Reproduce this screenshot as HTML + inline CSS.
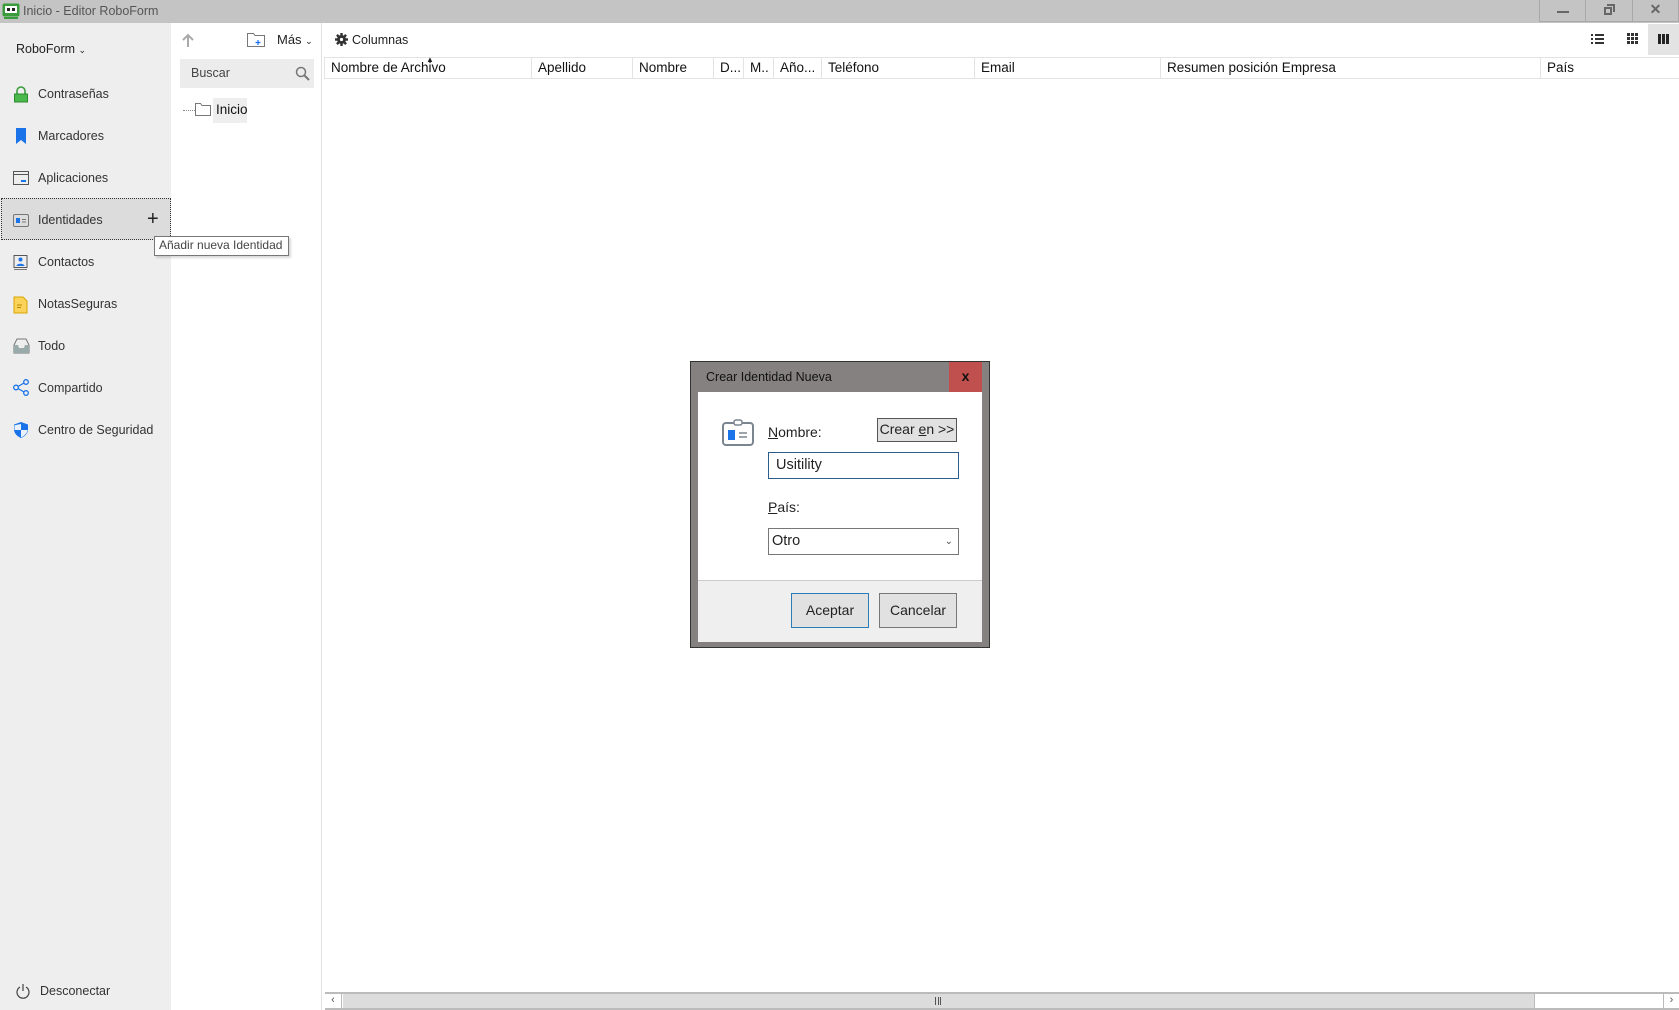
<!DOCTYPE html>
<html><head><meta charset="utf-8">
<style>
*{box-sizing:border-box;margin:0;padding:0}
body{width:1679px;height:1010px;overflow:hidden;background:#fff;font-family:"Segoe UI","Liberation Sans",sans-serif;font-size:13px;color:#222;position:relative}
.abs{position:absolute}
#title{left:0;top:0;width:1679px;height:23px;background:#c4c4c4}
#side{left:0;top:23px;width:171px;height:987px;background:#eeeeee}
.item{position:absolute;left:38px;font-size:12.5px;color:#333}
.ico{position:absolute;left:13px}
#tree{left:171px;top:23px;width:151px;height:987px;background:#fff;border-right:1px solid #e2e2e2}
.th{position:absolute;top:57px;height:22px;border-right:1px solid #e3e3e3;border-top:1px solid #e3e3e3;border-bottom:1px solid #e3e3e3;padding-left:6px;line-height:20px;font-size:13.5px;color:#111}
</style></head><body>
<div id="title" class="abs">
  <svg class="abs" style="left:2px;top:3px" width="18" height="16"><rect x="0.5" y="0.5" width="17" height="13" rx="2" fill="#3a9c3a"/><rect x="3" y="3" width="12" height="7" fill="#fff"/><rect x="5" y="5" width="3" height="3" fill="#222"/><rect x="10" y="5" width="3" height="3" fill="#222"/><rect x="2" y="14" width="14" height="2" fill="#3a9c3a"/></svg>
  <div class="abs" style="left:23px;top:4px;font-size:12.5px;color:#555">Inicio - Editor RoboForm</div>
  <div class="abs" style="left:1539px;top:0;width:47px;height:22px;border:1px solid #a8a8a8;border-top:none"><div class="abs" style="left:17px;top:11px;width:12px;height:2px;background:#666"></div></div>
  <div class="abs" style="left:1586px;top:0;width:46px;height:22px;border-bottom:1px solid #a8a8a8"><div class="abs" style="left:18px;top:7px;width:8px;height:8px;border:2px solid #666"></div><div class="abs" style="left:21px;top:4px;width:8px;height:8px;border-top:2px solid #666;border-right:2px solid #666"></div></div>
  <div class="abs" style="left:1632px;top:0;width:47px;height:22px;border:1px solid #a8a8a8;border-top:none;text-align:center;font-weight:bold;color:#666;line-height:18px;font-size:14px">✕</div>
</div>
<div id="side" class="abs">
  <div class="item" style="left:16px;top:19px;color:#222">RoboForm <span style="font-size:9px">&#8964;</span></div>
  <svg class="ico" style="top:63px" width="16" height="17"><path d="M4 8V5a4 4 0 0 1 8 0v3" fill="none" stroke="#3a9c3a" stroke-width="1.6"/><rect x="1.5" y="8" width="13" height="8" fill="#4bb84b" stroke="#2d8a2d"/></svg>
  <div class="item" style="top:64px">Contraseñas</div>
  <svg class="ico" style="top:105px" width="16" height="17"><path d="M3 0h10v16l-5-4-5 4z" fill="#1a73e8"/></svg>
  <div class="item" style="top:106px">Marcadores</div>
  <svg class="ico" style="top:148px" width="17" height="15"><rect x="0.5" y="0.5" width="15" height="13" fill="none" stroke="#555"/><line x1="1" y1="3.5" x2="15" y2="3.5" stroke="#555"/><rect x="8" y="9" width="5" height="2" fill="#1a73e8"/></svg>
  <div class="item" style="top:148px">Aplicaciones</div>
  <div class="abs" style="left:1px;top:175px;width:170px;height:42px;background:#dcdcdc;border:1px dotted #333"></div>
  <svg class="ico" style="top:190px" width="17" height="15"><rect x="0.5" y="1.5" width="15" height="12" rx="1.5" fill="none" stroke="#777"/><rect x="3" y="5" width="4" height="5" fill="#1a73e8"/><line x1="9" y1="6.5" x2="13" y2="6.5" stroke="#777"/><line x1="9" y1="9" x2="13" y2="9" stroke="#777"/></svg>
  <div class="item" style="top:190px">Identidades</div>
  <div class="abs" style="left:147px;top:185px;font-size:20px;color:#222">+</div>
  <svg class="ico" style="top:231px" width="16" height="17"><rect x="1" y="1.5" width="13" height="12" fill="none" stroke="#555"/><circle cx="7.5" cy="5.5" r="2" fill="#1a73e8"/><path d="M3.5 12c0-3 8-3 8 0z" fill="#1a73e8"/><line x1="1" y1="15.5" x2="14" y2="15.5" stroke="#777"/></svg>
  <div class="item" style="top:232px">Contactos</div>
  <svg class="ico" style="top:273px" width="16" height="18"><path d="M1 1h9l4 4v12H1z" fill="#fbd35a" stroke="#d9a400"/><line x1="4" y1="9" x2="9" y2="9" stroke="#b98a00"/><line x1="4" y1="11.5" x2="8" y2="11.5" stroke="#b98a00"/></svg>
  <div class="item" style="top:274px">NotasSeguras</div>
  <svg class="ico" style="top:315px" width="17" height="16"><path d="M1 7l3-6h9l3 6v8H1z" fill="#eee" stroke="#777"/><path d="M1 7h4l1 3h5l1-3h4v8H1z" fill="#9aa"/></svg>
  <div class="item" style="top:316px">Todo</div>
  <svg class="ico" style="top:356px" width="17" height="17"><circle cx="3" cy="8.5" r="2.3" fill="none" stroke="#1a73e8" stroke-width="1.3"/><circle cx="13" cy="3" r="2.3" fill="none" stroke="#1a73e8" stroke-width="1.3"/><circle cx="13" cy="14" r="2.3" fill="none" stroke="#1a73e8" stroke-width="1.3"/><path d="M5 7.5l6-3.5M5 9.5l6 3.5" stroke="#1a73e8" stroke-width="1.2"/></svg>
  <div class="item" style="top:358px">Compartido</div>
  <svg class="ico" style="top:398px" width="16" height="18"><path d="M8 1l7 2.5v5c0 4-3.5 7-7 8.5C4.5 15.5 1 12.5 1 8.5v-5z" fill="#1a73e8"/><path d="M8 3v6h6.5c-.3 3.4-3.4 6.2-6.5 7.4V9H1.5V4.2z" fill="#fff" opacity=".9"/></svg>
  <div class="item" style="top:400px">Centro de Seguridad</div>
  <svg class="ico" style="left:15px;top:960px" width="16" height="17"><path d="M5 4a6 6 0 1 0 6 0" fill="none" stroke="#444" stroke-width="1.2"/><line x1="8" y1="1" x2="8" y2="8" stroke="#444" stroke-width="1.2"/></svg>
  <div class="item" style="left:40px;top:961px">Desconectar</div>
</div>
<div class="abs" style="left:154px;top:236px;width:135px;height:20px;background:#fff;border:1px solid #777;font-size:12px;color:#444;padding-left:4px;line-height:17px;box-shadow:2px 2px 2px rgba(0,0,0,.15);z-index:3">Añadir nueva Identidad</div>
<div id="tree" class="abs">
  <svg class="abs" style="left:11px;top:10px" width="12" height="14"><path d="M6 14V2M1 7l5-5 5 5" fill="none" stroke="#aaa" stroke-width="2"/></svg>
  <svg class="abs" style="left:76px;top:9px" width="18" height="15"><path d="M.5 1.5h6l1.5 2h9.5v11H.5z" fill="#fff" stroke="#777"/><path d="M11 8v5M8.5 10.5h5" stroke="#1a73e8" stroke-width="1.2"/></svg>
  <div class="abs" style="left:106px;top:9px;font-size:13px;color:#222">Más <span style="font-size:9px">&#8964;</span></div>
  <div class="abs" style="left:9px;top:36px;width:134px;height:29px;background:#ececec"><span class="abs" style="left:11px;top:7px;font-size:12.5px;color:#444">Buscar</span>
  <svg class="abs" style="left:115px;top:7px" width="15" height="15"><circle cx="6" cy="6" r="4.5" fill="none" stroke="#777" stroke-width="1.5"/><line x1="9.5" y1="9.5" x2="14" y2="14" stroke="#777" stroke-width="2"/></svg></div>
  <div class="abs" style="left:12px;top:87px;width:12px;border-top:1px dotted #888"></div>
  <svg class="abs" style="left:24px;top:80px" width="16" height="13"><path d="M.5 .5h5l1.5 2h8.5v10H.5z" fill="#fff" stroke="#777"/></svg>
  <div class="abs" style="left:42px;top:75px;width:34px;height:25px;background:#eee;font-size:13.5px;padding-left:3px;line-height:24px;color:#111">Inicio</div>
</div>
<svg class="abs" style="left:335px;top:33px" width="13" height="13"><g fill="#333"><circle cx="6.5" cy="6.5" r="4.5"/><rect x="5.3" y="0" width="2.4" height="13"/><rect x="0" y="5.3" width="13" height="2.4"/><rect x="5.3" y="0" width="2.4" height="13" transform="rotate(45 6.5 6.5)"/><rect x="5.3" y="0" width="2.4" height="13" transform="rotate(-45 6.5 6.5)"/></g><circle cx="6.5" cy="6.5" r="1.6" fill="#fff"/></svg>
<div class="abs" style="left:352px;top:33px;font-size:12.5px">Columnas</div>
<svg class="abs" style="left:1591px;top:33px" width="13" height="11"><rect x="0" y="1" width="2" height="2" fill="#333"/><rect x="4" y="1" width="9" height="2" fill="#333"/><rect x="0" y="5" width="2" height="2" fill="#333"/><rect x="4" y="5" width="9" height="2" fill="#333"/><rect x="0" y="9" width="2" height="2" fill="#333"/><rect x="4" y="9" width="9" height="2" fill="#333"/></svg>
<svg class="abs" style="left:1627px;top:33px" width="12" height="12"><g fill="#333"><rect x="0" y="0" width="3" height="3"/><rect x="4" y="0" width="3" height="3"/><rect x="8" y="0" width="3" height="3"/><rect x="0" y="4" width="3" height="3"/><rect x="4" y="4" width="3" height="3"/><rect x="8" y="4" width="3" height="3"/><rect x="0" y="8" width="3" height="3"/><rect x="4" y="8" width="3" height="3"/><rect x="8" y="8" width="3" height="3"/></g></svg>
<div class="abs" style="left:1648px;top:24px;width:31px;height:31px;background:#e3e3e3"><svg class="abs" style="left:10px;top:10px" width="12" height="10"><g fill="#222"><rect x="0" y="0" width="3" height="10"/><rect x="4" y="0" width="3" height="10"/><rect x="8" y="0" width="3" height="10"/></g></svg></div>
<div class="th" style="left:324px;width:208px;border-left:1px solid #e3e3e3">Nombre de Archivo</div>
<div class="abs" style="left:426px;top:55px;font-size:8px">&#9650;</div>
<div class="th" style="left:532px;width:101px">Apellido</div>
<div class="th" style="left:633px;width:81px">Nombre</div>
<div class="th" style="left:714px;width:30px">D...</div>
<div class="th" style="left:744px;width:30px">M..</div>
<div class="th" style="left:774px;width:48px">Año...</div>
<div class="th" style="left:822px;width:153px">Teléfono</div>
<div class="th" style="left:975px;width:186px">Email</div>
<div class="th" style="left:1161px;width:380px">Resumen posición Empresa</div>
<div class="th" style="left:1541px;width:138px;border-right:none">País</div>
<div class="abs" style="left:325px;top:992px;width:1354px;height:18px;border-top:2px solid #bbb;border-bottom:2px solid #bbb;background:#fff">
  <div class="abs" style="left:0;top:0;width:17px;height:14px;border-right:1px solid #bbb;font-size:11px;color:#555;text-align:center;line-height:13px">&lsaquo;</div>
  <div class="abs" style="left:18px;top:0;width:1192px;height:14px;background:#dcdcdc;border-right:1px solid #bbb"><div class="abs" style="left:592px;top:3px;width:6px;height:8px;border-left:1px solid #555;border-right:1px solid #555"><div style="margin-left:2px;width:1px;height:8px;background:#555"></div></div></div>
  <div class="abs" style="left:1338px;top:0;width:16px;height:14px;border-left:1px solid #bbb;font-size:11px;color:#555;text-align:center;line-height:13px">&rsaquo;</div>
</div>
<!-- dialog -->
<div class="abs" style="left:690px;top:361px;width:300px;height:287px;background:#858181;border:1px solid #333">
  <div class="abs" style="left:15px;top:8px;font-size:12.5px;color:#111">Crear Identidad Nueva</div>
  <div class="abs" style="left:258px;top:0;width:33px;height:30px;background:#c0504d;text-align:center;font-weight:bold;font-size:14px;line-height:28px;color:#111">x</div>
  <div class="abs" style="left:7px;top:30px;width:284px;height:188px;background:#fff">
    <svg class="abs" style="left:24px;top:27px" width="33" height="27"><rect x="1" y="4" width="30" height="22" rx="3" fill="none" stroke="#7b8590" stroke-width="2"/><rect x="12" y="1" width="8" height="5" rx="2" fill="#fff" stroke="#7b8590" stroke-width="1.5"/><rect x="6" y="11" width="7" height="10" fill="#1a73e8"/><line x1="17" y1="14" x2="25" y2="14" stroke="#7b8590" stroke-width="1.5"/><line x1="17" y1="18" x2="25" y2="18" stroke="#7b8590" stroke-width="1.5"/></svg>
    <div class="abs" style="left:70px;top:32px;font-size:14px"><u>N</u>ombre:</div>
    <div class="abs" style="left:179px;top:26px;width:80px;height:24px;background:#e1e1e1;border:1px solid #555;font-size:14px;text-align:center;line-height:21px">Crear <u>e</u>n &gt;&gt;</div>
    <div class="abs" style="left:70px;top:60px;width:191px;height:27px;border:1px solid #2b5d8d;font-size:14.5px;padding-left:7px;line-height:25px">Usitility</div>
    <div class="abs" style="left:70px;top:107px;font-size:14px"><u>P</u>aís:</div>
    <div class="abs" style="left:70px;top:136px;width:191px;height:27px;border:1px solid #777;font-size:14.5px;padding-left:3px;line-height:25px">Otro<span class="abs" style="right:5px;top:0;font-size:10px;color:#555">&#8964;</span></div>
  </div>
  <div class="abs" style="left:7px;top:218px;width:284px;height:62px;background:#efefef;border-top:1px solid #ccc">
    <div class="abs" style="left:93px;top:12px;width:78px;height:35px;background:#e1e1e1;border:1px solid #2b7bb9;font-size:14px;text-align:center;line-height:32px">Aceptar</div>
    <div class="abs" style="left:181px;top:12px;width:78px;height:35px;background:#e1e1e1;border:1px solid #777;font-size:14px;text-align:center;line-height:32px">Cancelar</div>
  </div>
</div>
</body></html>
